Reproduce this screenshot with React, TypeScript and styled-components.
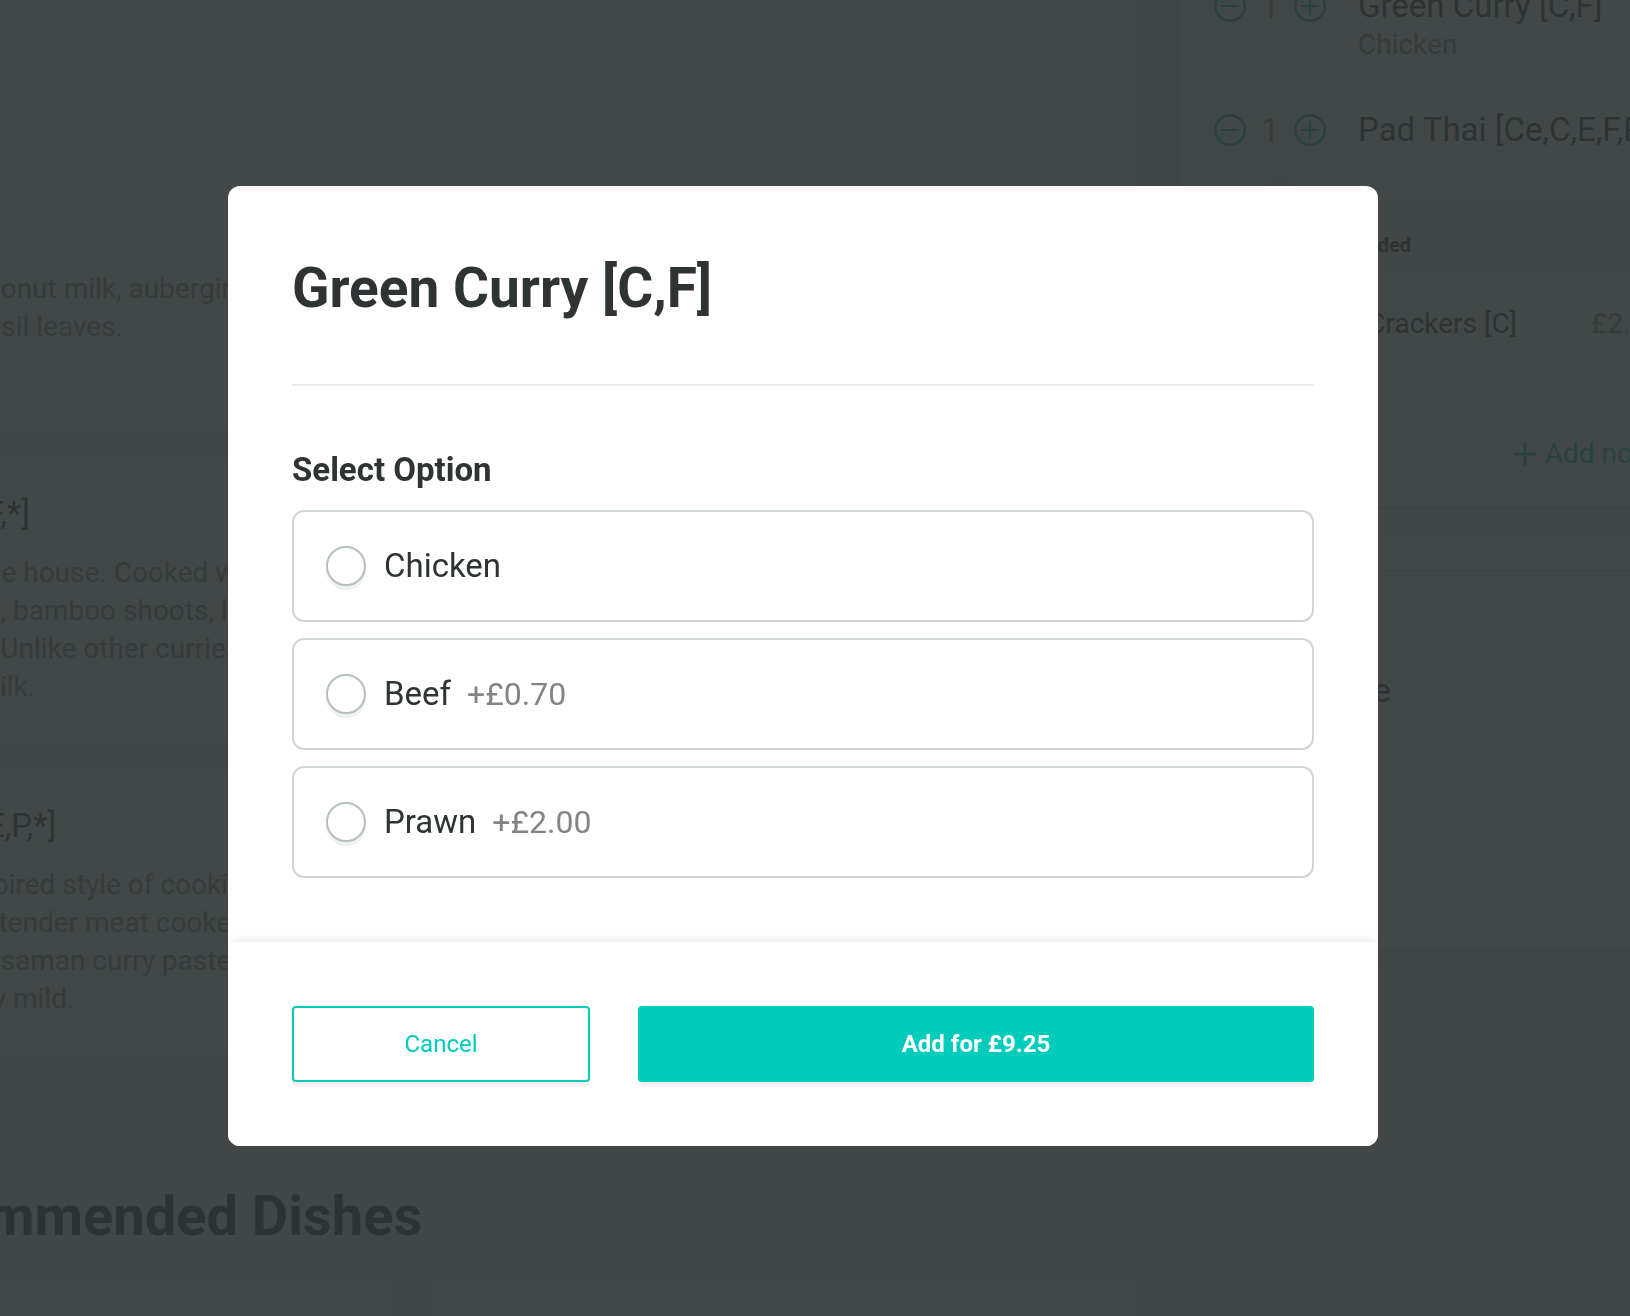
import React, { useState } from "react";
import styled, { createGlobalStyle } from "styled-components";

const ink = "#2e3333";
const muted = "#828585";
const teal = "#00ccbc";
const canvas = "#eff2f2";
const rule = "#e8ebeb";

const GlobalStyle = createGlobalStyle`
  *, *::before, *::after { box-sizing: border-box; }
  body {
    margin: 0;
    background: ${canvas};
    color: ${ink};
    font-family: Roboto, "Liberation Sans", sans-serif;
  }
  h1, h2, h3, p, ul, fieldset, legend { margin: 0; padding: 0; }
  ul { list-style: none; }
  button { font-family: inherit; cursor: pointer; }
`;

/* ---------- Restaurant page behind the dialog ---------- */

const Viewport = styled.div`
  height: 100vh;
  overflow: hidden;
`;

const Page = styled.main`
  display: grid;
  grid-template-columns: minmax(0, 1fr) 512px;
  column-gap: 43px;
  margin-right: -64px;
`;

const Menu = styled.div`
  margin-left: -14px;
`;

const MenuList = styled.ul`
  display: grid;
  gap: 32px;
`;

const MenuCard = styled.li<{ $tall?: boolean }>`
  display: flex;
  flex-direction: column;
  justify-content: flex-end;
  gap: 20px;
  min-height: ${(p) => (p.$tall ? "428px" : "0")};
  padding: 34px 0 ${(p) => (p.$tall ? "82px" : "34px")};
  background: #fff;
`;

const DishName = styled.h3`
  font-size: 33px;
  line-height: 40px;
  font-weight: 400;
  white-space: pre;
`;

const DishText = styled.p`
  font-size: 28px;
  line-height: 38px;
  color: ${muted};
  white-space: pre;
`;

const Recommended = styled.section`
  display: grid;
  gap: 32px;
  padding-top: 132px;
`;

const RecommendedTitle = styled.h2`
  font-size: 56px;
  line-height: 64px;
  font-weight: 700;
`;

const RecommendedRow = styled.div`
  display: grid;
  grid-template-columns: 404px 1fr;
  gap: 40px;
`;

const RecommendedCard = styled.div`
  height: 240px;
  background: #f9fafa;
`;

const Basket = styled.aside`
  background: #fff;
  box-shadow: -11px 0 0 ${rule};
  align-self: start;
`;

const BasketItems = styled.ul`
  display: grid;
  gap: 46px;
  margin-top: -14px;
  padding: 0 32px 50px;
`;

const BasketItem = styled.li`
  display: grid;
  grid-template-columns: 112px 1fr;
  column-gap: 32px;
  white-space: nowrap;
`;

const Stepper = styled.div`
  display: flex;
  align-items: center;
  justify-content: space-between;
  height: 40px;
  font-size: 33px;
  color: ${muted};
`;

const IconButton = styled.button`
  display: flex;
  padding: 0;
  border: 0;
  background: none;
  color: ${teal};
`;

const Upsell = styled.div`
  position: relative;
  padding: 31px 64px 15px;
  background: ${canvas};
  font-size: 20px;
  line-height: 28px;
  font-weight: 700;

  &::before {
    content: "";
    position: absolute;
    left: 66px;
    bottom: 100%;
    border: 30px solid transparent;
    border-top: 0;
    border-bottom-color: ${canvas};
  }
`;

const UpsellRow = styled.div`
  display: flex;
  justify-content: space-between;
  padding: 31px 32px 0 64px;
  font-size: 28px;
  line-height: 38px;
`;

const UpsellName = styled.span`
  display: flex;
  align-items: center;
  gap: 12px;
`;

const Price = styled.span`
  color: ${muted};
`;

const NotesRow = styled.div`
  display: flex;
  justify-content: flex-end;
  padding: 92px 37px 33px;
`;

const NotesButton = styled(IconButton)`
  align-items: center;
  gap: 8px;
  font-size: 28px;
  line-height: 38px;
`;

const Band = styled.div`
  height: 32px;
  background: ${canvas};
  border-top: 4px solid #dfe3e3;
`;

const Totals = styled.div`
  margin-top: 32px;
  padding: 99px 32px 46px;
  border-top: 2px solid #d9dddd;
  border-bottom: 2px solid ${canvas};
  font-size: 33px;
  line-height: 40px;
`;

const Checkout = styled.div`
  height: 189px;
  box-shadow: 0 20px 0 ${rule};
`;

/* ---------- Dialog ---------- */

const Overlay = styled.div`
  position: fixed;
  inset: 0;
  display: flex;
  align-items: center;
  justify-content: center;
  padding: 16px 24px 0 0;
  background: rgba(46, 51, 51, 0.9);
`;

const Dialog = styled.form`
  width: 1150px;
  max-width: 100%;
  overflow: hidden;
  border-radius: 12px;
  background: #fff;
`;

const DialogBody = styled.div`
  padding: 64px;
`;

const DialogTitle = styled.h1`
  padding-bottom: 58px;
  border-bottom: 2px solid ${rule};
  font-size: 55px;
  line-height: 76px;
  font-weight: 700;
`;

const Options = styled.fieldset`
  display: grid;
  gap: 16px;
  min-width: 0;
  padding-top: 64px;
  border: 0;
`;

const OptionsTitle = styled.legend`
  float: left;
  margin-bottom: 4px;
  font-size: 33px;
  line-height: 40px;
  font-weight: 700;
`;

const Option = styled.label`
  display: flex;
  align-items: center;
  height: 112px;
  padding: 0 32px;
  border: 2px solid #cfd6d5;
  border-radius: 12px;
  font-size: 33px;
  line-height: 40px;
  cursor: pointer;
`;

const Radio = styled.input`
  appearance: none;
  flex: none;
  width: 40px;
  height: 40px;
  margin: 0 18px 0 0;
  border: 2px solid #b4c0c0;
  border-radius: 50%;
  background: #fff;
  box-shadow: 0 4px 0 #f0f0f0;

  &:checked {
    border: 12px solid ${teal};
  }
`;

const Extra = styled.span`
  margin-left: 16px;
  font-size: 32px;
  color: ${muted};
`;

const Footer = styled.footer`
  display: grid;
  grid-template-columns: 298fr 676fr;
  gap: 48px;
  padding: 64px;
  background: #fff;
  box-shadow: 0 -6px 8px -4px rgba(0, 0, 0, 0.08);
`;

const Action = styled.button<{ $primary?: boolean }>`
  height: 76px;
  border: 2px solid ${teal};
  border-radius: 4px;
  background: ${(p) => (p.$primary ? teal : "#fff")};
  color: ${(p) => (p.$primary ? "#fff" : teal)};
  font-size: 24px;
  font-weight: ${(p) => (p.$primary ? 700 : 400)};
  box-shadow: 0 4px 0 #f2f2f2;
`;

function CircleIcon({ plus }: { plus?: boolean }) {
  return (
    <svg width="32" height="32" viewBox="0 0 32 32" fill="none" stroke="currentColor" strokeWidth="2.5" strokeLinecap="round">
      <circle cx="16" cy="16" r="14.75" />
      <path strokeWidth="2" d={plus ? "M8 16h16M16 8v16" : "M8 16h16"} />
    </svg>
  );
}

function PlusIcon() {
  return (
    <svg width="24" height="24" viewBox="0 0 24 24" fill="none" stroke="currentColor" strokeWidth="3" strokeLinecap="round">
      <path d="M1.5 12h21M12 1.5v21" />
    </svg>
  );
}

const dishes = [
  { name: "", text: "conut milk, aubergine\nasil leaves." },
  {
    name: "F,*]",
    text: "he house. Cooked with\ns, bamboo shoots, lime\n. Unlike other curries\n  ilk.",
  },
  {
    name: "E,P,*]",
    text: " pired style of cooking\n, tender meat cooked\nssaman curry paste,\nly mild.",
  },
];

const basket = [
  { name: "Green Curry [C,F]", note: "Chicken" },
  { name: "Pad Thai [Ce,C,E,F,P,*]", note: "" },
];

const options = [
  { name: "Chicken", extra: "" },
  { name: "Beef", extra: "+£0.70" },
  { name: "Prawn", extra: "+£2.00" },
];

export default function App() {
  const [choice, setChoice] = useState("");

  return (
    <>
      <GlobalStyle />
      <Viewport>
        <Page>
          <Menu>
            <MenuList>
              {dishes.map((dish) => (
                <MenuCard key={dish.text} $tall={!dish.name}>
                  {dish.name && <DishName>{dish.name}</DishName>}
                  <DishText>{dish.text}</DishText>
                </MenuCard>
              ))}
            </MenuList>
            <Recommended>
              <RecommendedTitle>mmended Dishes</RecommendedTitle>
              <RecommendedRow>
                <RecommendedCard />
                <RecommendedCard />
              </RecommendedRow>
            </Recommended>
          </Menu>

          <Basket>
            <BasketItems>
              {basket.map((item) => (
                <BasketItem key={item.name}>
                  <Stepper>
                    <IconButton type="button" aria-label={`Remove one ${item.name}`}>
                      <CircleIcon />
                    </IconButton>
                    1
                    <IconButton type="button" aria-label={`Add one ${item.name}`}>
                      <CircleIcon plus />
                    </IconButton>
                  </Stepper>
                  <div>
                    <DishName>{item.name}</DishName>
                    {item.note && <DishText>{item.note}</DishText>}
                  </div>
                </BasketItem>
              ))}
            </BasketItems>
            <Upsell>People also added</Upsell>
            <UpsellRow>
              <UpsellName>
                <PlusIcon />
                Prawn Crackers [C]
              </UpsellName>
              <Price>£2.75</Price>
            </UpsellRow>
            <NotesRow>
              <NotesButton type="button">
                <PlusIcon />
                Add note
              </NotesButton>
            </NotesRow>
            <Band />
            <Totals>Delivery Fee</Totals>
            <Checkout />
          </Basket>
        </Page>
      </Viewport>

      <Overlay>
        <Dialog role="dialog" aria-modal="true" aria-labelledby="dish-title" onSubmit={(e) => e.preventDefault()}>
          <DialogBody>
            <DialogTitle id="dish-title">Green Curry [C,F]</DialogTitle>
            <Options>
              <OptionsTitle>Select Option</OptionsTitle>
              {options.map((option) => (
                <Option key={option.name}>
                  <Radio
                    type="radio"
                    name="protein"
                    value={option.name}
                    checked={choice === option.name}
                    onChange={() => setChoice(option.name)}
                  />
                  {option.name}
                  {option.extra && <Extra>{option.extra}</Extra>}
                </Option>
              ))}
            </Options>
          </DialogBody>
          <Footer>
            <Action type="button">Cancel</Action>
            <Action type="submit" $primary>
              Add for £9.25
            </Action>
          </Footer>
        </Dialog>
      </Overlay>
    </>
  );
}
